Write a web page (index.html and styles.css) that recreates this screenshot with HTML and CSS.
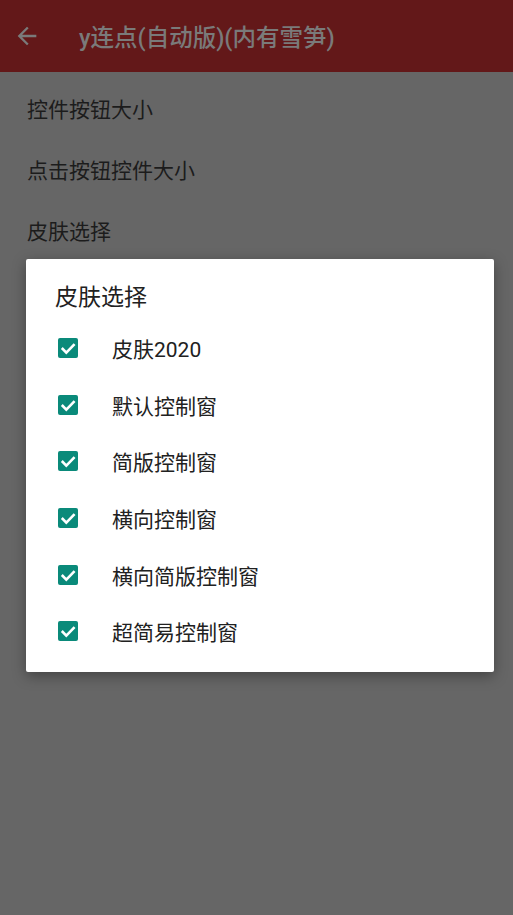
FILE: index.html
```html
<!DOCTYPE html>
<html lang="zh-CN">
<head>
<meta charset="utf-8">
<title>y连点(自动版)(内有雪笋)</title>
<link rel="stylesheet" href="styles.css">
</head>
<body>
<div class="screen">
  <header class="toolbar">
    <svg class="back" width="28" height="28" viewBox="0 0 24 24"><path d="M20 11H7.83l5.59-5.59L12 4l-8 8 8 8 1.41-1.41L7.83 13H20v-2z" fill="#7a7a7a"/></svg>
    <div class="title">y连点(自动版)(内有雪笋)</div>
  </header>
  <main class="list">
    <div class="row">控件按钮大小</div>
    <div class="row">点击按钮控件大小</div>
    <div class="row">皮肤选择</div>
  </main>
  <div class="dialog">
    <div class="dlg-title">皮肤选择</div>
    <div class="opts">
      <div class="opt"><span class="cb"><svg width="20" height="20" viewBox="0 0 20 20"><path d="M3.8 10l4.5 4.6 8.3-8.5" fill="none" stroke="#fff" stroke-width="2.6"/></svg></span><span class="lbl">皮肤2020</span></div>
      <div class="opt"><span class="cb"><svg width="20" height="20" viewBox="0 0 20 20"><path d="M3.8 10l4.5 4.6 8.3-8.5" fill="none" stroke="#fff" stroke-width="2.6"/></svg></span><span class="lbl">默认控制窗</span></div>
      <div class="opt"><span class="cb"><svg width="20" height="20" viewBox="0 0 20 20"><path d="M3.8 10l4.5 4.6 8.3-8.5" fill="none" stroke="#fff" stroke-width="2.6"/></svg></span><span class="lbl">简版控制窗</span></div>
      <div class="opt"><span class="cb"><svg width="20" height="20" viewBox="0 0 20 20"><path d="M3.8 10l4.5 4.6 8.3-8.5" fill="none" stroke="#fff" stroke-width="2.6"/></svg></span><span class="lbl">横向控制窗</span></div>
      <div class="opt"><span class="cb"><svg width="20" height="20" viewBox="0 0 20 20"><path d="M3.8 10l4.5 4.6 8.3-8.5" fill="none" stroke="#fff" stroke-width="2.6"/></svg></span><span class="lbl">横向简版控制窗</span></div>
      <div class="opt"><span class="cb"><svg width="20" height="20" viewBox="0 0 20 20"><path d="M3.8 10l4.5 4.6 8.3-8.5" fill="none" stroke="#fff" stroke-width="2.6"/></svg></span><span class="lbl">超简易控制窗</span></div>
    </div>
  </div>
</div>
</body>
</html>
```
FILE: styles.css
```css
html, body {
  margin: 0;
  padding: 0;
}
body {
  font-family: Roboto, "Noto Sans CJK SC", sans-serif;
  background: #666666;
}
.screen {
  position: relative;
  width: 513px;
  height: 915px;
  background: #666666;
  overflow: hidden;
}
.toolbar {
  height: 72px;
  background: #631819;
  display: flex;
  align-items: center;
}
.back {
  margin-left: 13px;
  width: 28px;
  height: 28px;
  flex: none;
}
.title {
  margin-left: 38px;
  font-size: 23.5px;
  color: #7a7a7a;
  font-weight: 500;
}
.list {
  padding-top: 8px;
}
.row {
  height: 61px;
  line-height: 61px;
  padding-left: 27px;
  font-size: 21px;
  color: #1c1c1c;
}
.dialog {
  position: absolute;
  left: 26px;
  top: 259px;
  width: 468px;
  height: 413px;
  background: #ffffff;
  border-radius: 2px;
  box-shadow: 0 4px 14px rgba(0, 0, 0, 0.35);
  box-sizing: border-box;
  padding-top: 24px;
}
.dlg-title {
  padding-left: 29px;
  font-size: 23px;
  line-height: 30px;
  color: #212121;
}
.opts {
  margin-top: 7px;
  display: flex;
  flex-direction: column;
}
.opt {
  height: 56.6px;
  display: flex;
  align-items: center;
  padding-left: 32px;
}
.cb {
  width: 20px;
  height: 20px;
  background: #0a8a7a;
  border-radius: 2px;
  display: flex;
  flex: none;
}
.lbl {
  margin-left: 34px;
  font-size: 21px;
  color: #212121;
}
```
